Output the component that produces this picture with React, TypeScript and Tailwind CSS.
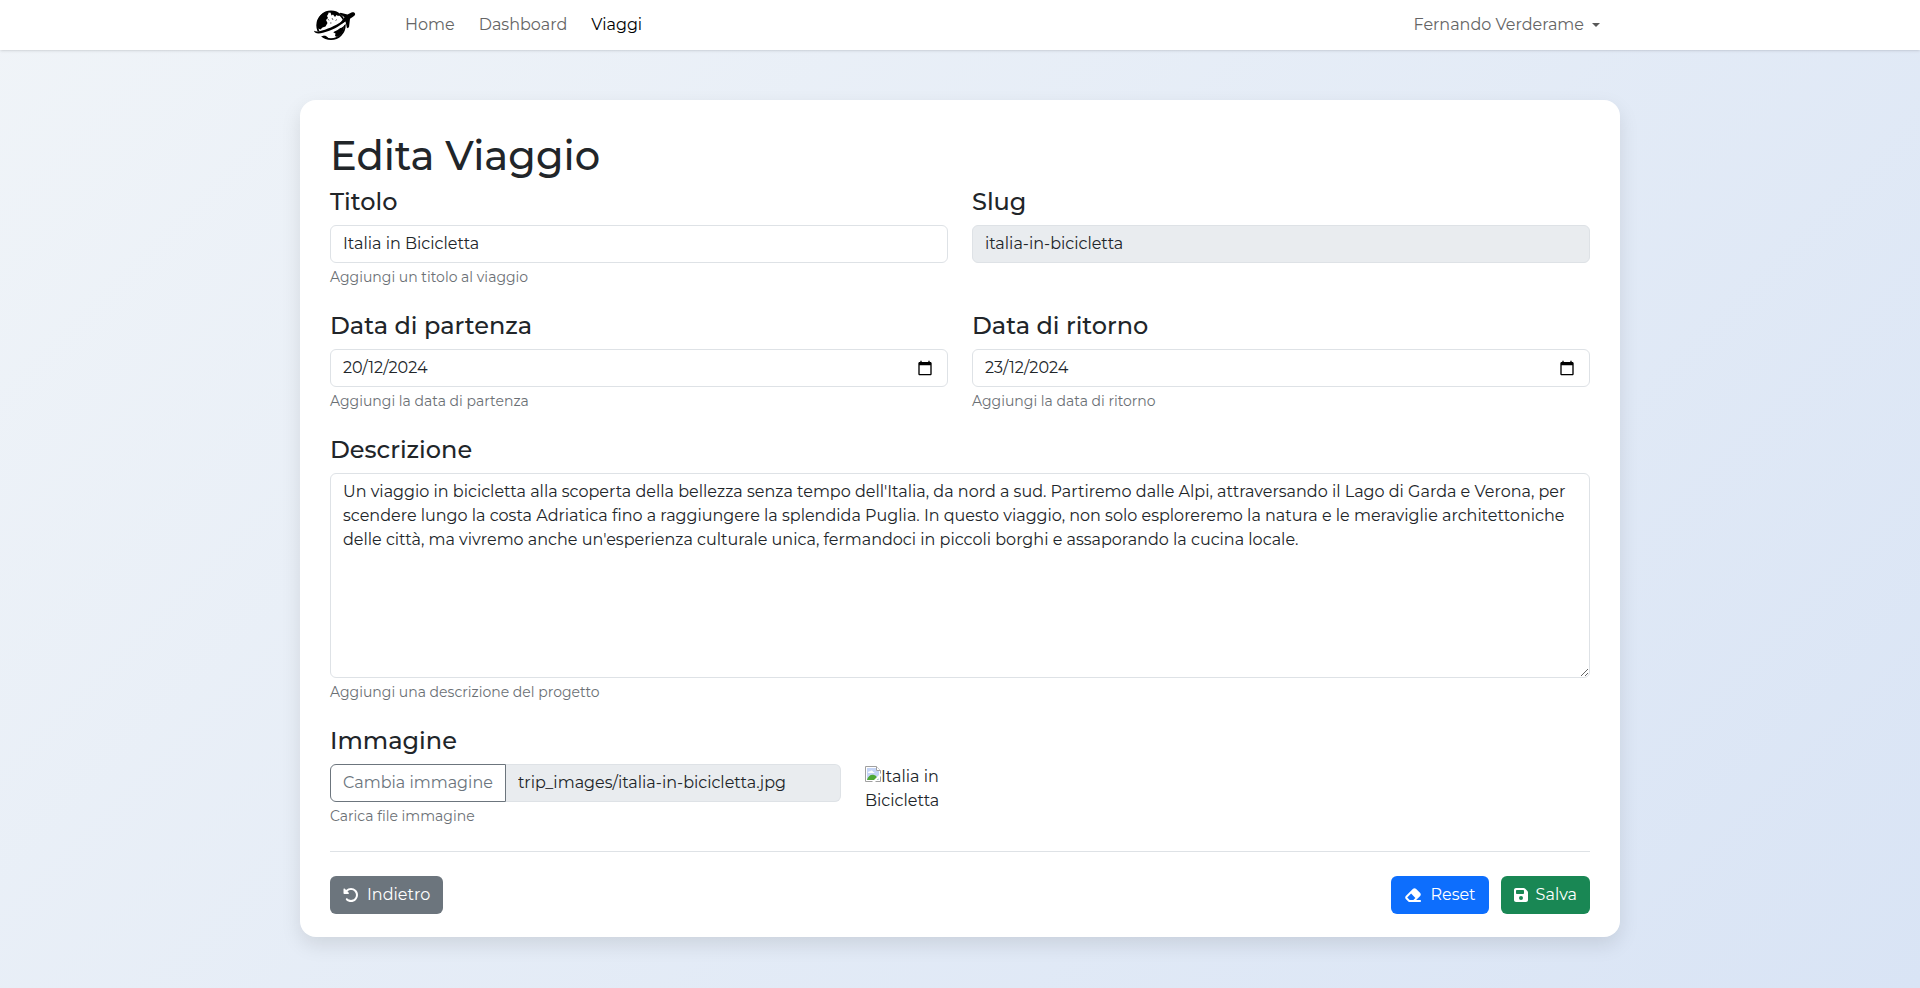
import React, { ReactNode } from 'react';
import { FaEraser, FaFloppyDisk, FaRotateLeft } from 'react-icons/fa6';

const control =
  'block w-full rounded-md border border-[#dee2e6] px-3 py-1.5 text-base leading-6 text-[#212529]';

function Field({ id, label, help, children }: { id: string; label: string; help?: string; children: ReactNode }) {
  return (
    <div className="flex min-w-0 flex-col items-start">
      <label htmlFor={id} className="mb-[9px] text-2xl leading-7 font-medium">
        {label}
      </label>
      {children}
      {help && <p className="mt-1 text-sm leading-[21px] text-[#6b7075]">{help}</p>}
    </div>
  );
}

function DateInput({ id, value }: { id: string; value: string }) {
  return (
    <div className="flex w-full items-center rounded-md border border-[#dee2e6] pr-3.5">
      <input
        id={id}
        inputMode="numeric"
        defaultValue={value}
        className="min-w-0 flex-1 py-1.5 pl-3 text-base leading-6 text-[#212529]"
      />
      <button type="button" aria-label="Apri calendario">
        <svg viewBox="0 0 24 24" className="block size-4" fill="#000" aria-hidden="true">
          <path d="M20 3h-1V1h-2v2H7V1H5v2H4c-1.100 0-2 .9-2 2v16c0 1.100.9 2 2 2h16c1.100 0 2-.9 2-2V5c0-1.100-.9-2-2-2zm0 18H4V8h16v13z" />
        </svg>
      </button>
    </div>
  );
}

function Logo() {
  return (
    <svg viewBox="0 0 42 32" className="h-8 w-[42px]" aria-hidden="true">
      <circle cx="17" cy="16.300" r="13.800" fill="#fff" stroke="#000" strokeWidth="1.800" />
      <path d="M5 8.500C7 5 10 3 13.500 2.500l1 2-1.500 2.500 1 2-2 2 1.500 3-2 3.500-3 1-2 2-2.500-1C3 15 3.500 11.500 5 8.500z" fill="#000" />
      <path d="M16 2c4-.2 8 1.200 10.500 4L24 7l-1.500-1L21 8l-2-2.500-1.500 1z" fill="#000" />
      <path d="M14 10l1 1.500M18 9l1 2M21.500 11.500l1.500-1M16 14h1.500" stroke="#000" strokeWidth=".6" />
      <path d="M19.500 21l3.500-2.500 4 .5 3-2c0 5-3 9-7 11l-2-1 .5-2.500-2-1z" fill="#000" />
      <path d="M9 26l3 1 3 2.500-2 .3C11 29 9.500 28 8 26.500z" fill="#000" />
      <path d="M0 23c1 2 4 2.500 8 1.500C18 22 27 17 34 9" fill="none" stroke="#fff" strokeWidth="5" />
      <path d="M0 21.800c.5 3.200 5 3.200 9 2 9-2.500 16-6 22-11.500l-1.500-1.300C24 15.500 16 19.300 8 21.600c-3 1-6 1.300-8 .2z" fill="#000" />
      <path d="M41 4.500c.6 1-.5 2.300-2 3.300l-3 2-1 8.500-2 1-1.500-6.800-4.500 2.800-1-1 4.500-6-5-3.500 1-1 7 1.700 4-2c1.500-.6 3-.2 3.500 1z" fill="#000" />
    </svg>
  );
}

function BrokenImage() {
  return (
    <svg viewBox="0 0 16 16" className="inline-block size-4 align-baseline" aria-hidden="true">
      <path d="M.5.5h11l4 4v11H.5z" fill="#fff" stroke="#a0a0a0" />
      <path d="M2 2h9v3h3v9H2z" fill="#c4d4f6" />
      <path d="M3 7c0-1 1-2 2-1.500C5.500 4 8 4 8 6c1 0 1.500.5 1.500 1z" fill="#fff" />
      <path d="M2 14c1-4 4-6 7-5 2 .5 3 2 4 5z" fill="#4ea837" />
      <path d="M16 7L7 16h3l6-6z" fill="#fff" />
      <path d="M11.500.5v4h4" fill="#fff" stroke="#a0a0a0" />
    </svg>
  );
}

export default function App() {
  return (
    <div className="min-h-screen bg-[linear-gradient(135deg,#f0f4f8,#d9e4f5)] font-[Montserrat,Inter,sans-serif] text-base leading-6 text-[#212529]">
      <header className="bg-white shadow-sm">
        <nav className="mx-auto flex h-[50px] max-w-[1320px] items-center px-3.5">
          <a href="#home" aria-label="Home page" className="mr-[49px]">
            <Logo />
          </a>
          <div className="flex flex-1 gap-6 text-[#656565]">
            <a href="#home">Home</a>
            <a href="#dashboard">Dashboard</a>
            <a href="#viaggi" className="text-black">Viaggi</a>
          </div>
          <button type="button" className="mr-1.5 flex items-center gap-2 text-[#656565]">
            Fernando Verderame
            <span className="border-x-4 border-t-4 border-x-transparent border-t-[#595959]" />
          </button>
        </nav>
      </header>

      <main className="mx-auto mt-[50px] max-w-[1320px] rounded-2xl bg-white px-[30px] pt-8 pb-[23px] shadow-[0_8px_20px_rgba(0,0,0,0.1)]">
        <h1 className="mb-2 text-[40px] leading-[48px] font-medium">Edita Viaggio</h1>
        <form onSubmit={(e) => e.preventDefault()}>
          <div className="grid grid-cols-2 gap-6">
            <Field id="titolo" label="Titolo" help="Aggiungi un titolo al viaggio">
              <input id="titolo" defaultValue="Italia in Bicicletta" className={control} />
            </Field>
            <Field id="slug" label="Slug">
              <input id="slug" readOnly value="italia-in-bicicletta" className={control + ' bg-[#e9ecef]'} />
            </Field>
            <Field id="partenza" label="Data di partenza" help="Aggiungi la data di partenza">
              <DateInput id="partenza" value="20/12/2024" />
            </Field>
            <Field id="ritorno" label="Data di ritorno" help="Aggiungi la data di ritorno">
              <DateInput id="ritorno" value="23/12/2024" />
            </Field>
            <div className="col-span-2">
              <Field id="descrizione" label="Descrizione" help="Aggiungi una descrizione del progetto">
                <textarea
                  id="descrizione"
                  className={control + ' h-[205px]'}
                  defaultValue="Un viaggio in bicicletta alla scoperta della bellezza senza tempo dell'Italia, da nord a sud. Partiremo dalle Alpi, attraversando il Lago di Garda e Verona, per scendere lungo la costa Adriatica fino a raggiungere la splendida Puglia. In questo viaggio, non solo esploreremo la natura e le meraviglie architettoniche delle città, ma vivremo anche un'esperienza culturale unica, fermandoci in piccoli borghi e assaporando la cucina locale."
                />
              </Field>
            </div>
          </div>

          <div className="mt-6 grid grid-cols-12 gap-x-6">
            <div className="col-span-5">
              <Field id="immagine" label="Immagine" help="Carica file immagine">
                <div className="flex w-full">
                  <button type="button" className="shrink-0 rounded-l-md border border-[#6c757d] px-3 py-1.5 text-[#6c757d]">
                    Cambia immagine
                  </button>
                  <input
                    id="immagine"
                    readOnly
                    value="trip_images/italia-in-bicicletta.jpg"
                    className="min-w-0 flex-1 rounded-r-md border border-l-0 border-[#dee2e6] bg-[#e9ecef] px-3 py-1.5"
                  />
                </div>
              </Field>
            </div>
            <div className="col-span-1 mt-[38px]">
              <BrokenImage />
              Italia in Bicicletta
            </div>
          </div>

          <hr className="my-6 border-[#dee2e6]" />

          <div className="flex items-center">
            <a href="#viaggi" className="flex h-[38px] items-center gap-2 rounded-md bg-[#6c757d] px-[13px] text-white">
              <FaRotateLeft />
              Indietro
            </a>
            <button type="reset" className="ml-auto flex h-[38px] items-center gap-2 rounded-md bg-[#0d6efd] px-[13px] text-white">
              <FaEraser className="size-[18px]" />
              Reset
            </button>
            <button type="submit" className="ml-3 flex h-[38px] items-center gap-2 rounded-md bg-[#198754] px-[13px] text-white">
              <FaFloppyDisk className="h-4 w-3.5" />
              Salva
            </button>
          </div>
        </form>
      </main>
    </div>
  );
}
